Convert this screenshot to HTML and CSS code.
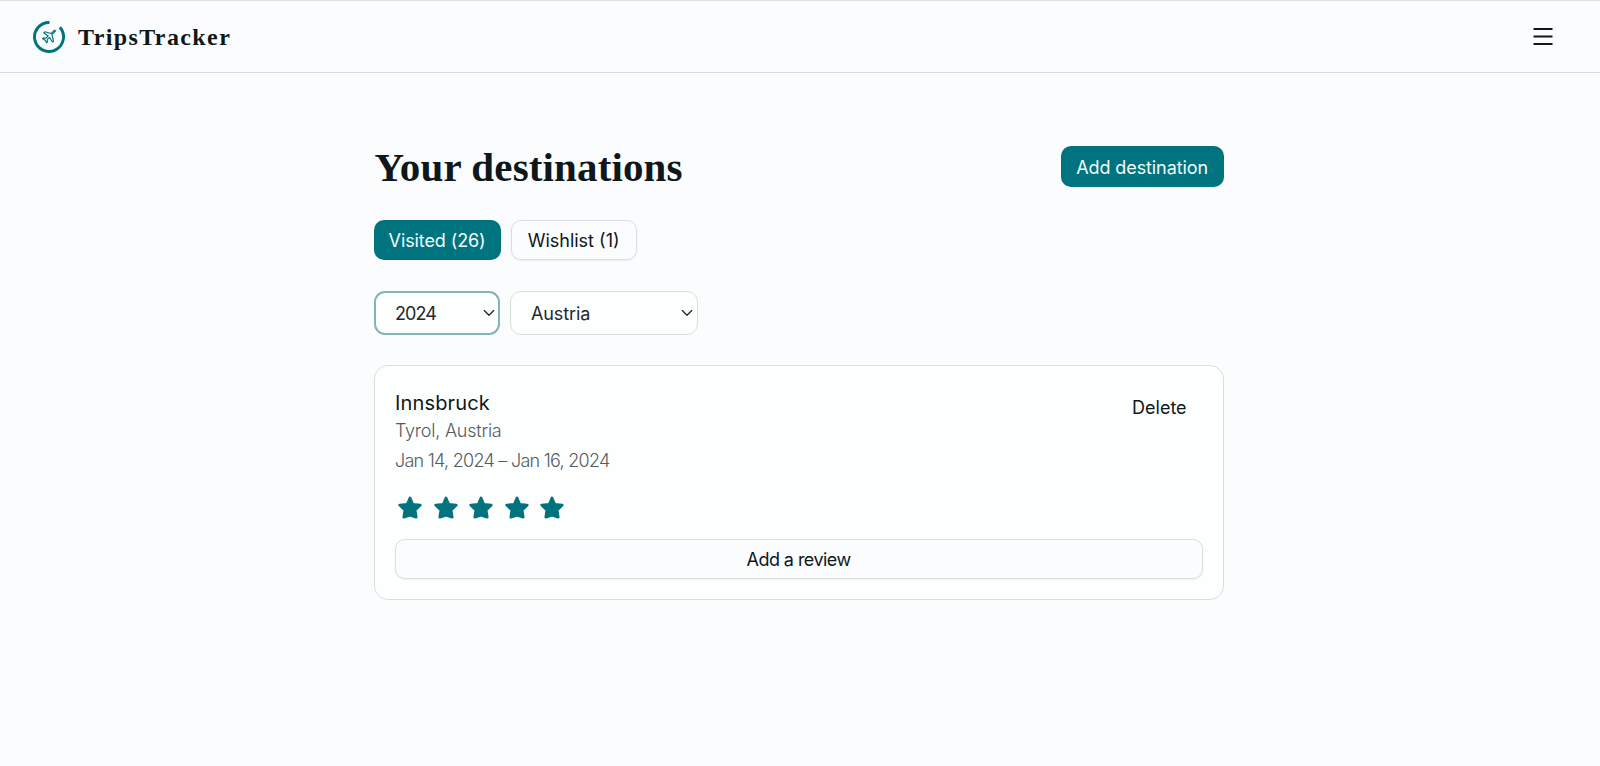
FILE: index.html
```html
<!DOCTYPE html>
<html lang="en">
<head>
<meta charset="utf-8">
<title>TripsTracker</title>
<link rel="stylesheet" href="styles.css">
</head>
<body>
<header class="header">
  <a class="brand">
    <svg class="logo" viewBox="0 0 32 32" fill="none" stroke="currentColor">
      <path d="M16.5 1.5A14.5 14.5 0 1 0 26.8 6.3" stroke-width="2.9"/>
      <path d="M22.7 10.1c-.7-.7-1.8-.4-2.5.3l-2.2 2.1-6.3-1.7-1 1 4.4 3.2-2.2 2.2-2.5-.3-.8.8 2.6 1.5 1.4 2.6.8-.8-.2-2.4 2.2-2.2 3.1 4.6 1-1-1.6-6.4 2.2-2.1c.8-.7 1.1-1.7.4-2.4z" stroke-width="1.15" stroke-linejoin="round"/>
    </svg>
    <span class="brand-name">TripsTracker</span>
  </a>
  <button class="menu" aria-label="Menu">
    <svg width="24" height="24" viewBox="0 0 24 24" fill="none" stroke="currentColor" stroke-width="2"><path d="M2.5 4h19M2.5 11.5h19M2.5 19h19"/></svg>
  </button>
</header>
<main class="main">
  <div class="title-row">
    <h1 class="title">Your destinations</h1>
    <button class="btn primary add">Add destination</button>
  </div>
  <div class="tabs">
    <button class="btn primary visited">Visited (26)</button>
    <button class="btn outline wishlist">Wishlist (1)</button>
  </div>
  <div class="filters">
    <div class="select year focused"><span>2024</span><svg class="chevron" viewBox="0 0 12 8"><path d="M1 1.2l5 5 5-5"/></svg></div>
    <div class="select country"><span>Austria</span><svg class="chevron" viewBox="0 0 12 8"><path d="M1 1.2l5 5 5-5"/></svg></div>
  </div>
  <article class="card">
    <div class="card-top">
      <div class="info">
        <h2 class="city">Innsbruck</h2>
        <p class="region">Tyrol, Austria</p>
        <p class="dates">Jan 14, 2024 – Jan 16, 2024</p>
      </div>
      <button class="delete">Delete</button>
    </div>
    <div class="stars">
      <svg class="star" viewBox="0 0 24 24"><path d="M12 3.4l2.3 5.5 6.5.6-4.4 4.3.9 6-5.3-1.7-5.3 1.7.9-6-4.4-4.3 6.5-.6z"/></svg>
      <svg class="star" viewBox="0 0 24 24"><path d="M12 3.4l2.3 5.5 6.5.6-4.4 4.3.9 6-5.3-1.7-5.3 1.7.9-6-4.4-4.3 6.5-.6z"/></svg>
      <svg class="star" viewBox="0 0 24 24"><path d="M12 3.4l2.3 5.5 6.5.6-4.4 4.3.9 6-5.3-1.7-5.3 1.7.9-6-4.4-4.3 6.5-.6z"/></svg>
      <svg class="star" viewBox="0 0 24 24"><path d="M12 3.4l2.3 5.5 6.5.6-4.4 4.3.9 6-5.3-1.7-5.3 1.7.9-6-4.4-4.3 6.5-.6z"/></svg>
      <svg class="star" viewBox="0 0 24 24"><path d="M12 3.4l2.3 5.5 6.5.6-4.4 4.3.9 6-5.3-1.7-5.3 1.7.9-6-4.4-4.3 6.5-.6z"/></svg>
    </div>
    <button class="btn outline review">Add a review</button>
  </article>
</main>
</body>
</html>
```
FILE: styles.css
```css
* { box-sizing: border-box; }
body {
  margin: 0;
  min-height: 766px;
  background: #fafcfe;
  color: #0f171a;
  font: 400 18px/28px Inter, "Liberation Sans", sans-serif;
}
h1, h2, p { margin: 0; font-weight: 400; }
button { font: inherit; color: inherit; border: 0; background: none; padding: 0; }
svg { display: block; flex: none; }

.header {
  display: flex;
  align-items: center;
  justify-content: space-between;
  height: 73px;
  padding: 0 45px 0 33px;
  border-top: 1px solid #dde1e2;
  border-bottom: 1px solid #d8dcde;
}
.brand { display: flex; align-items: center; gap: 13px; }
.logo { width: 32px; height: 32px; color: #00747e; }
.brand-name {
  font: 700 24px/32px "Liberation Serif", serif;
  letter-spacing: 1.4px;
}

.main { width: 850px; margin: 73px 0 0 373.6px; }
.title-row { display: flex; align-items: center; justify-content: space-between; height: 41px; }
.title { font: 700 41px/41px "Liberation Serif", serif; letter-spacing: .14px; padding: 2px 0 0 1px; white-space: nowrap; }

.btn {
  display: flex;
  align-items: center;
  justify-content: center;
  height: 40px;
  padding-top: 2px;
  border-radius: 10px;
  white-space: nowrap;
}
.primary { background: #00747e; color: #f2fcfd; }
.outline { background: #fafcfe; border: 1px solid #d9dfe0; box-shadow: 0 1px 2px rgba(0, 0, 0, .06); }
.add { width: 163px; height: 41px; letter-spacing: -.1px; }
.visited { width: 127px; letter-spacing: -.1px; }
.wishlist { width: 126px; }
.tabs { display: flex; gap: 10px; margin-top: 33px; }

.filters { display: flex; gap: 10px; margin-top: 31px; }
.select {
  display: flex;
  align-items: center;
  justify-content: space-between;
  height: 44px;
  padding: 0 4px 0 20.4px;
  border: 1px solid #d9dfe0;
  border-radius: 11px;
  background: #fdfefe;
  color: #22292c;
}
.select span { padding-top: 1px; }
.focused { border: 2px solid #85b3b7; padding: 0 3px 0 19.4px; }
.year { width: 126px; letter-spacing: -.9px; }
.country { width: 188px; letter-spacing: -.1px; }
.chevron { width: 12px; height: 8px; fill: none; stroke: #22292c; stroke-width: 1.4; }

.card {
  margin-top: 30px;
  height: 235px;
  padding: 20px;
  border: 1px solid #d9dfe0;
  border-radius: 14px;
  background: #fdfefe;
}
.card-top { display: flex; justify-content: space-between; height: 102px; padding-top: 1px; }
.info { padding-left: .4px; }
.city { font-size: 20px; line-height: 32px; letter-spacing: .15px; }
.region, .dates { color: #555c5f; font-weight: 300; }
.region { line-height: 24px; letter-spacing: -.22px; }
.dates { line-height: 36px; letter-spacing: -.74px; }
.delete { height: 41px; padding-right: 16px; }
.stars { display: flex; gap: 7.5px; padding: 6px 0 0 1.5px; height: 51px; }
.star { width: 28px; height: 28px; fill: #00747e; stroke: #00747e; stroke-width: 2.4; stroke-linejoin: round; }
.review { width: 100%; letter-spacing: -.55px; }
```
